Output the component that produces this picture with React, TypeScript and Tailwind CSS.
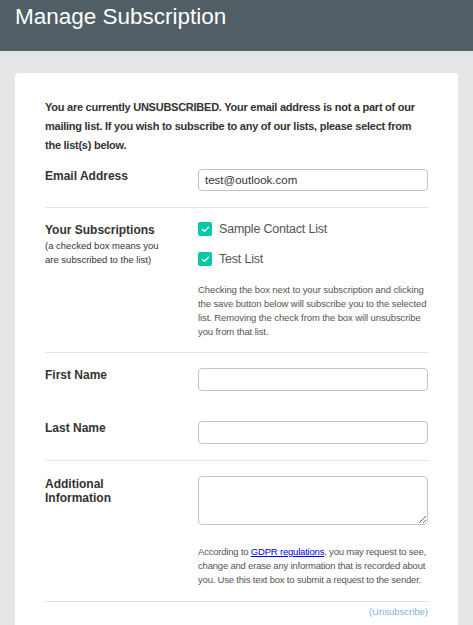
import { Check } from 'lucide-react';

const font = { fontFamily: '"Liberation Sans", Arial, sans-serif' };

function Divider() {
  return <div className="h-px bg-[#e3e3e3]" />;
}

function CheckRow({ label }: { label: string }) {
  return (
    <label className="flex items-center gap-[7px] h-[14px]">
      <span className="w-[14px] h-[14px] rounded-[2px] bg-[#07c8a8] flex items-center justify-center">
        <Check className="w-[9px] h-[9px] text-white" strokeWidth={3.5} />
      </span>
      <span className="text-[12.5px] tracking-[-0.2px] text-[#555]">{label}</span>
    </label>
  );
}

export default function App() {
  return (
    <div className="min-h-[625px] bg-[#e5e5e7] text-[#333]" style={font}>
      {/* Header */}
      <div className="h-[51px] bg-[#525e66] px-[15px] pt-[4px]">
        <h1 className="text-[22.5px] leading-[26px] text-white">Manage Subscription</h1>
      </div>

      <div className="px-[15px] pt-[22px]">
        <div className="bg-white rounded-[4px] px-[30px] pt-[25px] pb-[10px]">
          <p className="text-[11px] font-bold leading-[19px] tracking-[-0.25px] text-[#333]">
            You are currently UNSUBSCRIBED. Your email address is not a part of our mailing list. If you wish to subscribe to any of our lists, please select from the list(s) below.
          </p>

          {/* Email */}
          <div className="flex pt-[14px] pb-[16px]">
            <div className="w-[153px] shrink-0 text-[12px] font-bold leading-[14px]">Email Address</div>
            <input
              defaultValue="test@outlook.com"
              className="flex-1 h-[22px] border border-[#c4c4c4] rounded-[4px] px-[6px] text-[11.5px] text-[#333] outline-none"
            />
          </div>
          <Divider />

          {/* Subscriptions */}
          <div className="flex pt-[13px] pb-[13px]">
            <div className="w-[153px] shrink-0">
              <div className="text-[12px] font-bold leading-[16px] pt-[1px]">Your Subscriptions</div>
              <div className="text-[9.5px] leading-[14px] text-[#333] pt-[1px]">
                (a checked box means you<br />are subscribed to the list)
              </div>
            </div>
            <div className="flex-1">
              <div className="flex flex-col gap-[16px] pt-[1px]">
                <CheckRow label="Sample Contact List" />
                <CheckRow label="Test List" />
              </div>
              <p className="text-[9.5px] leading-[14px] tracking-[-0.1px] text-[#555] pt-[17px]">
                Checking the box next to your subscription and clicking the save button below will subscribe you to the selected list. Removing the check from the box will unsubscribe you from that list.
              </p>
            </div>
          </div>
          <Divider />

          {/* Names */}
          <div className="flex pt-[15px]">
            <div className="w-[153px] shrink-0 text-[12px] font-bold leading-[14px]">First Name</div>
            <input className="flex-1 h-[23px] border border-[#c4c4c4] rounded-[4px] px-[6px] text-[12px] outline-none" />
          </div>
          <div className="flex pt-[30px] pb-[16px]">
            <div className="w-[153px] shrink-0 text-[12px] font-bold leading-[14px]">Last Name</div>
            <input className="flex-1 h-[23px] border border-[#c4c4c4] rounded-[4px] px-[6px] text-[12px] outline-none" />
          </div>
          <Divider />

          {/* Additional */}
          <div className="flex pt-[15px] pb-[14px]">
            <div className="w-[153px] shrink-0 text-[12px] font-bold leading-[14px] pt-[1px]">
              Additional<br />Information
            </div>
            <div className="flex-1">
              <textarea className="block w-full h-[49px] border border-[#c4c4c4] rounded-[4px] px-[6px] text-[12px] outline-none" />
              <p className="text-[9.5px] leading-[14px] tracking-[-0.2px] text-[#555] pt-[20px] -mr-[4px]">
                According to <a href="#" className="text-[#0000ee] underline">GDPR regulations</a>, you may request to see, change and erase any information that is recorded about you. Use this text box to submit a request to the sender.
              </p>
            </div>
          </div>
          <Divider />
          <div className="text-right text-[9.5px] leading-[14px] text-[#7ab3ea] pt-[3px]">(Unsubscribe)</div>
        </div>
      </div>
    </div>
  );
}
